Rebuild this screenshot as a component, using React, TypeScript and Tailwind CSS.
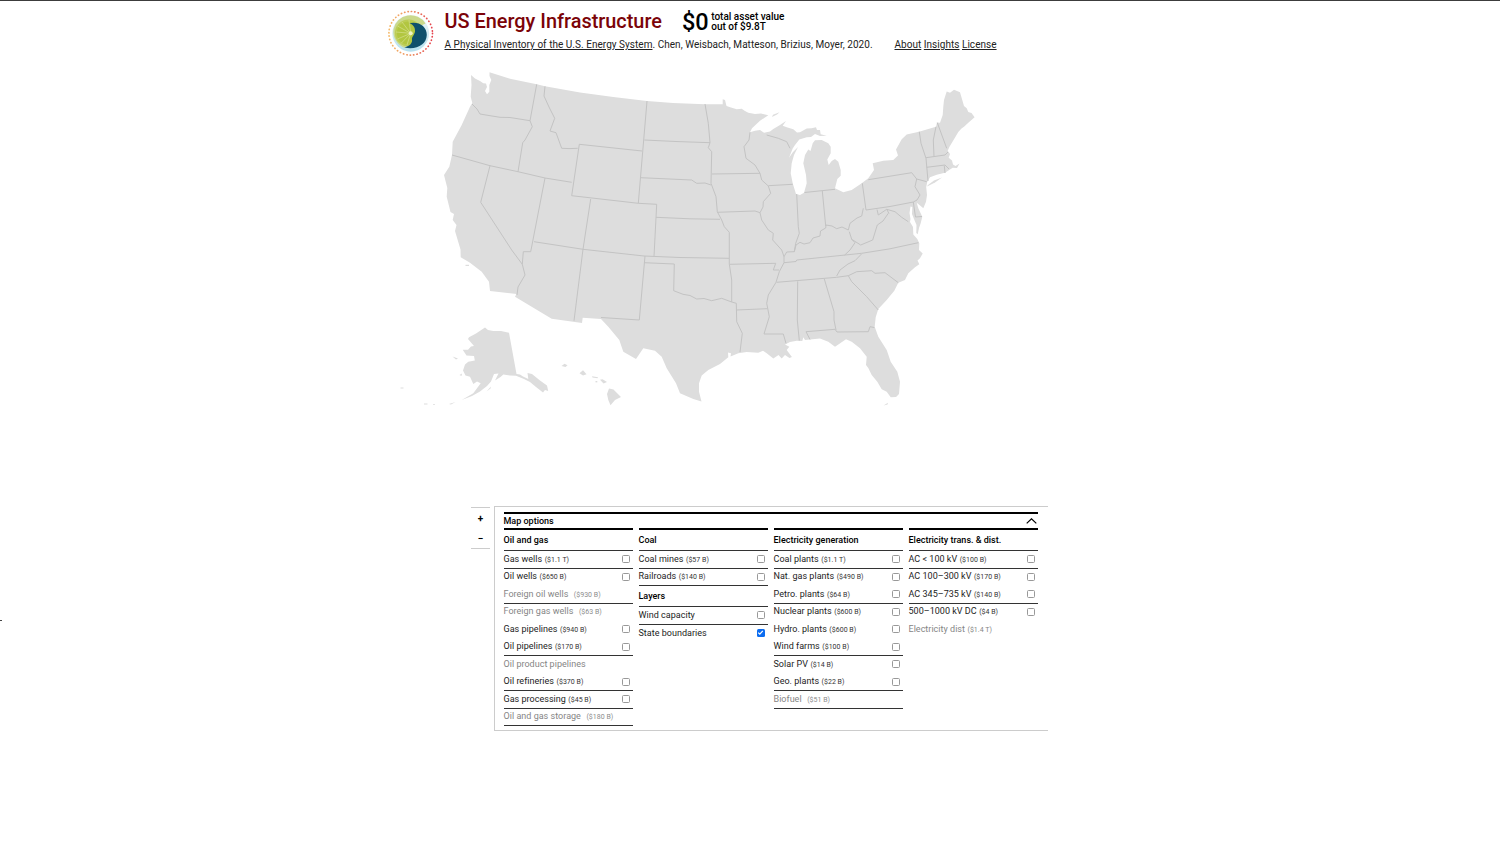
import React from "react";

type Item = {
  label: string;
  value?: string;
  disabled?: boolean;
  checked?: boolean;
  rule?: boolean;
};

type Section = { title: string; items: Item[] };

const COLUMNS: Section[][] = [
  [
    {
      title: "Oil and gas",
      items: [
        { label: "Gas wells", value: "($1.1 T)", rule: true },
        { label: "Oil wells", value: "($650 B)" },
        { label: "Foreign oil wells", value: "($930 B)", disabled: true, rule: true },
        { label: "Foreign gas wells", value: "($63 B)", disabled: true },
        { label: "Gas pipelines", value: "($940 B)" },
        { label: "Oil pipelines", value: "($170 B)", rule: true },
        { label: "Oil product pipelines", disabled: true },
        { label: "Oil refineries", value: "($370 B)", rule: true },
        { label: "Gas processing", value: "($45 B)", rule: true },
        { label: "Oil and gas storage", value: "($180 B)", disabled: true, rule: true },
      ],
    },
  ],
  [
    {
      title: "Coal",
      items: [
        { label: "Coal mines", value: "($57 B)", rule: true },
        { label: "Railroads", value: "($140 B)", rule: true },
      ],
    },
    {
      title: "Layers",
      items: [
        { label: "Wind capacity", rule: true },
        { label: "State boundaries", checked: true },
      ],
    },
  ],
  [
    {
      title: "Electricity generation",
      items: [
        { label: "Coal plants", value: "($1.1 T)", rule: true },
        { label: "Nat. gas plants", value: "($490 B)" },
        { label: "Petro. plants", value: "($64 B)", rule: true },
        { label: "Nuclear plants", value: "($600 B)" },
        { label: "Hydro. plants", value: "($600 B)" },
        { label: "Wind farms", value: "($100 B)", rule: true },
        { label: "Solar PV", value: "($14 B)" },
        { label: "Geo. plants", value: "($22 B)", rule: true },
        { label: "Biofuel", value: "($51 B)", disabled: true, rule: true },
      ],
    },
  ],
  [
    {
      title: "Electricity trans. & dist.",
      items: [
        { label: "AC < 100 kV", value: "($100 B)", rule: true },
        { label: "AC 100–300 kV", value: "($170 B)" },
        { label: "AC 345–735 kV", value: "($140 B)", rule: true },
        { label: "500–1000 kV DC", value: "($4 B)" },
        { label: "Electricity dist", value: "($1.4 T)", disabled: true },
      ],
    },
  ],
];

const MAINLAND =
  "M471 75L475 78.5 480 81 483.3 83.3 486 83.5 487 87 485 91 487 94.3 489.3 91.7 489.3 85 491.3 80 489.5 76 489.5 72.3 510 78.7 536.7 84.3 545 86.3 580 92.4 613.3 97 647 101 673 103 705 104.2 722.7 104.3 722.7 99.3 725 100 726.5 106 731 107.5 736.7 109.3 741.7 108.8 745 111 748.3 112.7 755 114 761 113.5 768.3 115.3 760 120.7 752 128.3 750 132.3 755 130.7 760 130 764 132.7 770 131.5 773.3 129 780 125 786 121 782.7 125.7 786.7 127.3 793.3 129.3 797 132.5 800 132.3 806.7 128.5 811.7 128.3 816 127.3 817 130 820 130 820.7 134.3 826.7 135.7 820 136 815 134 811 137 806.7 137.3 799.3 139.5 795 145 792.7 148.5 789 157.7 793 152 798 147 794 155 791.7 163.3 790.7 173.3 792.7 183.3 796 194 800 195 804 192.7 806.7 183.3 806 175 803.3 163.3 805 155 808.3 149.5 810.5 151 812.7 143.3 815 140.2 821.7 140 828.3 143.3 830.7 146.7 830.7 153.3 827.3 159.5 828.7 165 831.7 161 835 159 838.3 161.7 840.7 170 840.7 175.7 837.3 179 835 188.3 843.3 192.3 851.7 190 861.7 183.3 868.3 178.3 874 170 872.7 163.3 883.3 160.7 893.3 160 898 155.5 896 149.5 901.7 139.3 906.7 134.5 919 131.7 936 126.7 937 122.5 940 122.7 942.7 115 943.3 106.7 944 100 946.7 91.5 950 92.7 954 89.7 960 92.3 964 106 966.7 108.3 968.3 112 971.5 113 974.6 117.3 968.3 122.7 964 126.7 961.5 128.5 958.3 132 954 139.3 949.5 146.7 947.7 150.7 950 154 948.7 157.7 952 160.5 953 164.5 955.5 166 959.5 163.6 957 168 952.7 167.8 950 169.5 945 172.7 936.7 174.7 930 177.3 927.3 181.7 926.2 187 927 195 926 201.7 923.3 208.3 920.7 206 916.7 202.7 918.3 208.3 922.3 216.7 920.7 223.3 919 228 917.7 234.3 916.3 233 916.5 225 914 219 912 214 912.3 207 910.5 206.5 909.5 213 910.5 219 910 222 913 227 913.3 234.5 917.3 239 919.3 243.3 919 250 922.7 253.5 920 258.3 917.5 260.5 919.3 264.3 915 267.3 908.3 273.3 905 280 898.3 282.7 894.3 290.7 886.7 300 878.3 309 875.7 317.3 874.7 326.7 878.3 336.7 886.7 350 890.7 361.7 897.3 371.7 900 381.7 899 394 896 397 890.7 397.3 886.7 391.7 881.7 389.3 877.3 381.7 871.7 375 868.3 368 866 365 866.7 356.7 860 348.3 851.7 341.7 846 339.3 840.5 343 835 346.8 828.3 341.7 820 338.6 810 339.5 805 340 803.3 337.3 802.3 341 796.7 340.7 790 342 785 344.5 789.3 346.7 786.7 350 791.9 357 789.5 358 785 355 781.7 358.6 778.5 355 773.3 358.6 766.7 353.3 763 350.7 758.3 352.8 746.7 352 738.3 353.3 730.5 356.5 731 353.3 728 352.5 728.3 357.3 720 364 708.3 370 701.7 375.5 699 383.3 699 391.7 701.5 401.5 693.3 399 680 393.3 676 383.3 666.7 368.3 661.7 356.7 655 350.7 643.3 348.3 636 358.9 623.3 351.7 619.3 340 608.3 326.7 601 319 582.7 317.7 582 323 551.7 318.7 515 296.7 516.5 294 490 291 489 281.7 481.7 271.7 470 262.7 460.7 257.3 460.5 249.5 455 231 456.5 225 452.7 220 454 214 450.5 212 446.7 196.7 447.3 188 444 175 449.3 166.7 452 155 452.7 141.7 461.7 125 470 106.7 472.3 103 470.7 96.7 471.5 85Z";

const ISLANDS = [
  "M928 185L934 180.5 942 177.5 935 182.5 927 186.5Z",
  "M469 337.3L476 333.5 485 327.5 488 330 493.3 331 501 331 509 332.7 516.5 374 520 374.5 523 376.5 528.3 379 527.5 373 532 374 540 380.5 547 385.5 548.2 391 545 390 543 392.5 536 387 530 382 524 379 516 375.8 510 375.5 503.3 374.5 500.5 377 495 380.5 498.5 373.5 494 374 491 381.5 487 386 480 391.5 472 396 461.7 400 473.3 393.3 480.7 383.3 477 381.5 473.3 384 470 376.7 465.5 375.5 463 370.5 465 364.5 468.3 361.7 474.8 360.5 474 356 466.5 355.5 462.7 349.8 468 349.7 471 346.5 474 346 468 339Z",
  "M486.5 391.5L491 386.5 490.5 388.5Z",
  "M452.5 356.5L458 358.5 456 359.5Z",
  "M459.5 375L462 373.5 461.5 376Z",
  "M449 404L455.5 402 451 404.5Z",
  "M424 403.6h3.5v1h-3.5ZM433 404.3h2v.7h-2ZM400.5 387.6h3v.8h-3Z",
  "M561.5 366L564.5 363.8 567.5 365.3 565.5 367Z",
  "M579.5 373.2L583 370.3 586.5 374.3 583 375.5Z",
  "M592 376.3L598 377.2 597.5 378.2 592.5 377.5Z",
  "M600 379.7L602.5 379.2 607 382 603.5 383.5Z",
  "M595.5 381h1.8v1.4h-1.8Z",
  "M609 388.5L613.5 389.5 621 397 615 400 610.5 405.3 608.3 400 607 394Z",
  "M883.5 405.5L888 402.8 887.5 404.5Z",
  "M465.5 264.8h3.5v1.2h-3.5Z",
  "M773 114.8L779.5 112.2 777 114.6 772 117Z",
];

const BORDERS = [
  "M472 104L477 109 480 114 490 115.7 500 117.3 510 117.5 530 120.7M536.7 84.3L530 120.7 532.3 126.7 525 140 522.7 142.7 518 171.7",
  "M452 155L490 165.7 518 171.7 545 178 571.7 182.3",
  "M545 86.3L544 96 549 107 554.7 118.3 550 131 556 132.7 561.7 148.3 569 148.6 577.7 148.3M579.3 144.3L571.7 195.7M579.3 144.3L642 151",
  "M647 101L638.3 203.3M571.7 195.7L638.3 203.3 656.7 204.3",
  "M490 165.7L480.7 202.3 511.7 250 522.3 264.3M545 178L530.7 251.7 523.3 251.7 522.3 264.3 525 275 518 287 517 295",
  "M534 241.7L583 249.3 644 256 680 257.5 729 258.3M590.7 199L583 249.3 574 320.7",
  "M645 256L639.3 320 601 317.5M644 262.7L674.3 264 673.7 290.7 683 294.3 690 295.5 696.7 299 704 298.5 711.7 300.7 721.7 298.3 731.7 302 736.3 303.3",
  "M656.7 204.3L654 256.5M656 217.3L690 218.8 720 219.3",
  "M644.3 140L676 141.5 710 142.7M640.7 177.7L691.7 180 696.7 183.3 705 183 711 185",
  "M705 104L708.3 123.3 710 142.7 708.3 147.7 711.7 151.7 711 183.3 716 196.7 717.3 211.7 721.7 220 724.3 226.7 729.3 232.3 729.3 264 731.7 280 731.7 302",
  "M712 174L760 173.3M750 132.3L749 140 744 146.7 746 158.3 755 165 760 173.3 761.7 180 768.3 186 770.7 193.3 763.3 201.7 763 207 760 212.7 761.7 220 768.3 230 773.3 233.3 772.7 240 781.7 250 784 256.7",
  "M717.3 212.3L755 211 760 212.7M768.3 185.7L792.7 184.3M766.7 135L778.3 138.3 786.7 141.7 790 148.3",
  "M796.7 194L798.3 226.7 799.3 233.3 795.7 243.3 794.3 251.7M822.3 191L825.7 226M804.5 192.5L835 189.3",
  "M784 256.7L786.7 252 794.3 251.7 796 245 800 242.3 804 244 810 242.7 813 238 820 236 820.5 231 825.7 228 826 225 832 226 836.7 228.7 842 227 848.3 230 850 223.3 857 218 861.7 216 863.3 208.3",
  "M862.3 183.3L866 210 890 206.5 913.3 202M849.3 231.7L851.7 239.3 860.7 245 872.7 240 877.3 225 883 221 888.3 213.3",
  "M877 209.5L878.3 215 886.7 209.3 895 211.7 901.7 217.3 908.3 221.7M886.7 209.3L889 213.5M913.3 202L915.5 217 922 216.5",
  "M868.3 179.7L911.7 172.7 916.7 179 915 186.7 920 195 917 200 913.3 202M916.7 179L926.7 181.7",
  "M919.3 131.7L921 143.3 926 158.3 928 181M936 126.7L933.3 140 934 156.7M926 157.7L945 155 948 152M937.3 122.7L946.7 148.3M926.7 167.3L945 165 949 169M944.3 165.7L945 173",
  "M851.7 239.3L855 242.7 850 250 844.5 255.2M918.3 242.7L890 248.8 861.7 253.3 796.7 260 796 261.5 784 262.7",
  "M861.7 253.8L855 260.7 848 264 840 270 836.7 276M776.7 282.3L836.7 277.3 848.3 275.7 856.7 271.7 871.7 270.7 875 273.3 885 272.7 898.3 282.7",
  "M848.3 275.7L851.7 281.7 866.7 296.7 878.3 310M797.7 281.3L797.3 320 799.3 340.5M824.3 279L834 311.7 834 320 836 330",
  "M810 339.5L806 331.7 835 329.3 837 332 868.3 331.7 870 326.7 874.3 327.5",
  "M784 256.7L784 262.7 779.3 271.7 776 282.3 768.3 295 766.7 303.3 769.3 316.7 764 334 783.3 334 786 343.3",
  "M730 264.3L775.7 263.3 773.3 270 779 270M736.3 310L767.3 308.7M736.3 303.3L736.7 321.7 742.3 333.3 740 352",
];

function Logo() {
  return (
    <svg className="size-[48px] shrink-0" viewBox="0 0 48 48" aria-hidden="true">
      <defs>
        <linearGradient id="ring" x1="0" x2="1">
          <stop offset="0" stopColor="#f4b866" />
          <stop offset=".55" stopColor="#ec8a60" />
          <stop offset="1" stopColor="#e4414c" />
        </linearGradient>
        <linearGradient id="water" x1="0" x2="0" y1="0" y2="1">
          <stop offset="0" stopColor="#f2f8fa" />
          <stop offset="1" stopColor="#b5e0ee" />
        </linearGradient>
      </defs>
      <circle cx="23.7" cy="24.3" r="21.8" fill="none" stroke="url(#ring)" strokeWidth="1.7" strokeLinecap="round" strokeDasharray="0.3 3.124" />
      <circle cx="23.7" cy="24.3" r="18.4" fill="url(#water)" />
      <path d="M18 39A17.5 17.5 0 0 1 6.5 20 17.5 17.5 0 0 1 38.5 14.5Q26 20 18 39Z" fill="#cbd98c" />
      <circle cx="21.5" cy="24" r="13.6" fill="#bccd55" />
      <circle cx="21.5" cy="24" r="11.6" fill="#b2c640" />
      <g stroke="#d6e08e" strokeWidth=".7">
        <path d="M23.7 24.3L22 11M23.7 24.3L15 13M23.7 24.3L10.5 17M23.7 24.3L9 23M23.7 24.3L10.5 30M23.7 24.3L14 34.5M23.7 24.3L20 36" />
      </g>
      <path d="M22.3 14.3C31 11.8 40 17 39.8 26C39.5 35.5 30 41 17.5 38.6C23 37 25.6 34 25 30.6C24.5 28 27.2 26.5 28 22.5C28.3 18.5 26.5 15.8 22.3 14.3Z" fill="#0f506c" />
      <circle cx="23.7" cy="24.3" r="2" fill="#eef3c8" />
    </svg>
  );
}

function Checkbox({ checked }: { checked?: boolean }) {
  if (checked) {
    return (
      <span className="flex size-2 items-center justify-center rounded-[1.5px] bg-[#0b6cf0]">
        <svg className="size-[7px]" viewBox="0 0 7 7" fill="none" stroke="#fff" strokeWidth="1.2">
          <path d="M1.2 3.6L2.8 5.2 5.8 1.8" />
        </svg>
      </span>
    );
  }
  return <span className="size-2 rounded-[1.5px] border border-[#999] bg-white" />;
}

function Row({ item }: { item: Item }) {
  return (
    <div
      className={`flex h-[17.5px] items-center justify-between border-b pr-[3.5px] ${
        item.rule ? "border-[#333]" : "border-transparent"
      } ${item.disabled ? "text-[#858585]" : "text-[#1c1c1c]"}`}
    >
      <span className="flex items-baseline whitespace-pre text-[9px] leading-[14px] tracking-[0.02px]">
        {item.label}
        {item.value && (
          <span
            className={`text-[7px] ${
              item.disabled && item.label !== "Electricity dist" ? "ml-[5.5px] text-[#8c8c8c]" : item.disabled ? "ml-[2.5px]" : "ml-[2.5px] text-[#333]"
            }`}
          >
            {item.value}
          </span>
        )}
      </span>
      {!item.disabled && <Checkbox checked={item.checked} />}
    </div>
  );
}

export default function App() {
  return (
    <div className="flex h-[844px] w-[1500px] flex-col overflow-hidden border-t border-[#3c3c3c] bg-white font-['Roboto',sans-serif] text-black">
      <header className="flex h-[61px] pl-[387px] pt-[8px]">
        <Logo />
        <div className="ml-[9.5px] flex flex-col">
          <div className="flex h-[25px] items-center">
            <h1 className="w-[237.5px] whitespace-nowrap text-[19.9px] font-medium leading-6 text-[#7b0308]">US Energy Infrastructure</h1>
            <span className="text-[23.5px] font-medium leading-6">$0</span>
            <span className="ml-[2.5px] whitespace-nowrap text-[10px] font-medium leading-[10px]">
              total asset value
              <br />
              out of $9.8T
            </span>
          </div>
          <div className="mt-[4px] flex whitespace-pre text-[10px] leading-[14px] tracking-[0.035px] text-[#222]">
            <p className="w-[450px]">
              <a className="underline">A Physical Inventory of the U.S. Energy System</a>. Chen, Weisbach, Matteson, Brizius, Moyer, 2020.
            </p>
            <nav className="flex gap-[2.5px]">
              <a className="underline">About</a>
              <a className="underline">Insights</a>
              <a className="underline">License</a>
            </nav>
          </div>
        </div>
      </header>

      <main className="flex flex-col">
        <div className="flex h-[444px] pl-[390px]">
          <svg className="h-[350px] w-[600px]" viewBox="390 62 600 350" aria-label="Map of the United States">
            <g fill="#ddd">
              <path d={MAINLAND} />
              {ISLANDS.map((d) => (
                <path key={d} d={d} />
              ))}
            </g>
            <g fill="none" stroke="#c3c3c3" strokeWidth="1" strokeLinejoin="round">
              {BORDERS.map((d) => (
                <path key={d} d={d} />
              ))}
            </g>
          </svg>
        </div>

        <div className="flex items-start pl-[471px]">
          <div className="mt-px flex h-[42px] w-[19px] flex-col border-y border-[#ccc] pt-px text-center text-[10px] font-bold leading-[20px]">
            <span>+</span>
            <span>−</span>
          </div>
          <section className="ml-[3.5px] h-[225px] w-[554.5px] border-y border-l border-[#ccc] pl-[9px] pt-[5px]">
            <div className="flex h-[16px] w-[534.5px] items-center justify-between border-t-2 border-black">
              <h2 className="text-[9px] font-medium leading-[14px]">Map options</h2>
              <svg className="mr-[1.5px] h-[6px] w-[11px]" viewBox="0 0 11 6" fill="none" stroke="#000" strokeWidth="1.2">
                <path d="M.7 5.4L5.5 .8 10.3 5.4" />
              </svg>
            </div>
            <div className="grid w-[534.5px] grid-cols-4 gap-x-[5.5px]">
              {COLUMNS.map((sections) => (
                <div key={sections[0].title} className="flex flex-col border-t-2 border-black">
                  {sections.map((section) => (
                    <div key={section.title}>
                      <h3 className="flex h-[21px] items-center border-b border-[#333] text-[9px] font-medium leading-[14px]">
                        {section.title}
                      </h3>
                      {section.items.map((item) => (
                        <Row key={item.label} item={item} />
                      ))}
                    </div>
                  ))}
                </div>
              ))}
            </div>
          </section>
        </div>
      </main>
      <div className="mt-[-111px] h-px w-[2px] bg-[#444]" />
    </div>
  );
}
